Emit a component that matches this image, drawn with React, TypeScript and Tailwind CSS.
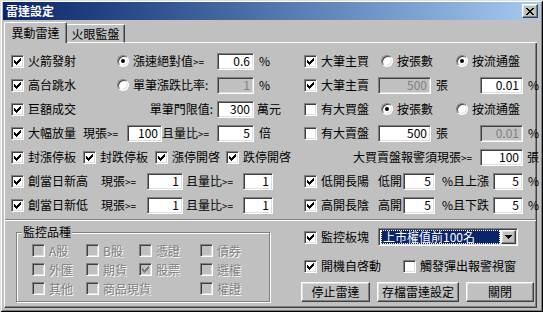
import React from "react";

const sunken =
  "border border-t-[#808080] border-l-[#808080] border-b-white border-r-white shadow-[inset_1px_1px_0_#404040,inset_-1px_-1px_0_#dfdfdf]";
const raised =
  "border border-t-white border-l-white border-b-[#404040] border-r-[#404040] shadow-[inset_-1px_-1px_0_#808080,inset_1px_1px_0_#dfdfdf]";

function CheckMark({ color }: { color: string }) {
  return (
    <svg width="7" height="7" viewBox="0 0 7 7" shapeRendering="crispEdges" fill={color}>
      <rect x="0" y="2" width="1" height="3" />
      <rect x="1" y="3" width="1" height="3" />
      <rect x="2" y="4" width="1" height="3" />
      <rect x="3" y="3" width="1" height="3" />
      <rect x="4" y="2" width="1" height="3" />
      <rect x="5" y="1" width="1" height="3" />
      <rect x="6" y="0" width="1" height="3" />
    </svg>
  );
}

function Chk({ checked = false, disabled = false }: { checked?: boolean; disabled?: boolean }) {
  return (
    <span
      className={`w-[13px] h-[13px] shrink-0 flex items-center justify-center ${sunken} ${
        disabled ? "bg-[#c0c0c0]" : "bg-white"
      }`}
    >
      {checked && <CheckMark color={disabled ? "#808080" : "#000"} />}
    </span>
  );
}

function Radio({ checked = false }: { checked?: boolean }) {
  return (
    <span className="w-[12px] h-[12px] shrink-0 rounded-full bg-white border border-t-[#808080] border-l-[#808080] border-b-white border-r-white shadow-[inset_1px_1px_0_#404040,inset_-1px_-1px_0_#dfdfdf] flex items-center justify-center">
      {checked && <span className="w-[4px] h-[4px] rounded-full bg-black" />}
    </span>
  );
}

function Edit({ w, value, disabled = false }: { w: string; value: string; disabled?: boolean }) {
  return (
    <span
      className={`${w} h-[17px] shrink-0 flex items-center justify-end pr-[3px] leading-[14px] ${sunken} ${
        disabled ? "bg-[#c0c0c0] text-[#808080]" : "bg-white text-black"
      }`}
    >
      {value}
    </span>
  );
}

function GE() {
  return <span className="text-[10px]">&gt;=</span>;
}

function CL({
  w,
  label,
  checked = false,
  disabled = false,
}: {
  w: string;
  label: React.ReactNode;
  checked?: boolean;
  disabled?: boolean;
}) {
  return (
    <span className={`${w} shrink-0 flex items-center`}>
      <Chk checked={checked} disabled={disabled} />
      <span
        className={`ml-[4px] whitespace-nowrap ${
          disabled ? "text-[#808080] [text-shadow:1px_1px_0_#ffffff]" : ""
        }`}
      >
        {label}
      </span>
    </span>
  );
}

function RL({ w, label, checked = false }: { w: string; label: React.ReactNode; checked?: boolean }) {
  return (
    <span className={`${w} shrink-0 flex items-center`}>
      <Radio checked={checked} />
      <span className="ml-[4px] whitespace-nowrap">{label}</span>
    </span>
  );
}

function Btn({ w, children }: { w: string; children: React.ReactNode }) {
  return (
    <span className={`${w} h-[20px] shrink-0 flex items-center justify-center bg-[#c0c0c0] ${raised}`}>
      {children}
    </span>
  );
}

export default function App() {
  return (
    <div className="w-[543px] h-[312px] bg-[#c0c0c0] shadow-[inset_1px_1px_0_#dfdfdf,inset_-1px_-1px_0_#000000,inset_2px_2px_0_#ffffff,inset_-2px_-2px_0_#808080] pt-[2px] px-[3px] text-[12px] leading-[14px] text-black font-['Noto_Sans_CJK_TC','Noto_Sans',sans-serif] overflow-hidden">
      {/* Title bar */}
      <div className="h-[18px] flex items-center bg-linear-to-r from-[#0a246a] to-[#a6caf0] pl-[3px] pr-[2px]">
        <span className="text-white font-bold text-[12px]">雷達設定</span>
        <span className={`ml-auto w-[16px] h-[14px] flex items-center justify-center bg-[#c0c0c0] ${raised}`}>
          <svg width="8" height="7" viewBox="0 0 8 7" shapeRendering="crispEdges" fill="#000">
            <rect x="0" y="0" width="2" height="1" />
            <rect x="6" y="0" width="2" height="1" />
            <rect x="1" y="1" width="2" height="1" />
            <rect x="5" y="1" width="2" height="1" />
            <rect x="2" y="2" width="4" height="1" />
            <rect x="3" y="3" width="2" height="1" />
            <rect x="2" y="4" width="4" height="1" />
            <rect x="1" y="5" width="2" height="1" />
            <rect x="5" y="5" width="2" height="1" />
            <rect x="0" y="6" width="2" height="1" />
            <rect x="6" y="6" width="2" height="1" />
          </svg>
        </span>
      </div>

      <div className="mt-[2px] ml-[1px] mr-[3px]">
        {/* Tabs */}
        <div className="flex items-end h-[21px]">
          <div className="w-[63px] h-[21px] shrink-0 bg-[#c0c0c0] border-l border-t border-r border-l-white border-t-white border-r-[#404040] shadow-[inset_-1px_0_0_#808080] rounded-t-[2px] flex items-center justify-center pb-[1px]">
            異動雷達
          </div>
          <div className="w-[58px] h-[19px] shrink-0 border-t border-r border-b border-t-white border-r-[#404040] border-b-white shadow-[inset_-1px_0_0_#808080] rounded-tr-[2px] flex items-center justify-center">
            火眼監盤
          </div>
          <div className="flex-1 h-[1px] bg-white" />
        </div>

        {/* Panel */}
        <div className="h-[265px] border-l border-r border-b border-l-white border-r-[#404040] border-b-[#404040] shadow-[inset_-1px_-1px_0_#808080]">
          <div className="pl-[6px] pt-[6px]">
            {/* Row 1 */}
            <div className="flex items-center h-[24px]">
              <div className="w-[293px] shrink-0 flex items-center">
                <CL w="w-[106px]" label="火箭發射" checked />
                <RL w="w-[100px]" label={<>漲速絕對值<GE /></>} checked />
                <Edit w="w-[37px]" value="0.6" />
                <span className="ml-[5px]">%</span>
              </div>
              <CL w="w-[77px]" label="大筆主買" checked />
              <RL w="w-[75px]" label="按張數" />
              <RL w="w-[75px]" label="按流通盤" checked />
            </div>
            {/* Row 2 */}
            <div className="flex items-center h-[24px]">
              <div className="w-[293px] shrink-0 flex items-center">
                <CL w="w-[106px]" label="高台跳水" checked />
                <RL w="w-[100px]" label="單筆漲跌比率:" />
                <Edit w="w-[37px]" value="1" disabled />
                <span className="ml-[5px]">%</span>
              </div>
              <CL w="w-[74px]" label="大筆主賣" checked />
              <Edit w="w-[53px]" value="500" disabled />
              <span className="w-[49px] shrink-0 pl-[5px]">張</span>
              <Edit w="w-[43px]" value="0.01" />
              <span className="ml-[5px]">%</span>
            </div>
            {/* Row 3 */}
            <div className="flex items-center h-[24px]">
              <div className="w-[293px] shrink-0 flex items-center">
                <CL w="w-[106px]" label="巨額成交" checked />
                <span className="w-[100px] shrink-0 text-right pr-[4px] whitespace-nowrap">單筆門限值:</span>
                <Edit w="w-[37px]" value="300" />
                <span className="ml-[3px]">萬元</span>
              </div>
              <CL w="w-[77px]" label="有大買盤" />
              <RL w="w-[75px]" label="按張數" checked />
              <RL w="w-[75px]" label="按流通盤" />
            </div>
            {/* Row 4 */}
            <div className="flex items-center h-[24px]">
              <div className="w-[293px] shrink-0 flex items-center">
                <CL w="w-[72px]" label="大幅放量" checked />
                <span className="w-[44px] shrink-0 whitespace-nowrap">現張<GE /></span>
                <Edit w="w-[35px]" value="100" />
                <span className="w-[55px] shrink-0 whitespace-nowrap">且量比<GE /></span>
                <Edit w="w-[37px]" value="5" />
                <span className="ml-[5px]">倍</span>
              </div>
              <CL w="w-[74px]" label="有大賣盤" />
              <Edit w="w-[53px]" value="500" />
              <span className="w-[49px] shrink-0 pl-[5px]">張</span>
              <Edit w="w-[43px]" value="0.01" disabled />
              <span className="ml-[5px]">%</span>
            </div>
            {/* Row 5 */}
            <div className="flex items-center h-[24px]">
              <div className="w-[293px] shrink-0 flex items-center">
                <CL w="w-[72px]" label="封漲停板" checked />
                <CL w="w-[72px]" label="封跌停板" checked />
                <CL w="w-[71px]" label="漲停開啓" checked />
                <CL w="w-[70px]" label="跌停開啓" checked />
              </div>
              <span className="w-[176px] shrink-0 text-right pr-[8px] whitespace-nowrap">
                大買賣盤報警須現張<GE />
              </span>
              <Edit w="w-[43px]" value="100" />
              <span className="ml-[4px]">張</span>
            </div>
            {/* Row 6 */}
            <div className="flex items-center h-[24px]">
              <div className="w-[293px] shrink-0 flex items-center">
                <CL w="w-[90px]" label="創當日新高" checked />
                <span className="w-[46px] shrink-0 whitespace-nowrap">現張<GE /></span>
                <Edit w="w-[36px]" value="1" />
                <span className="w-[60px] shrink-0 pl-[3px] whitespace-nowrap">且量比<GE /></span>
                <Edit w="w-[30px]" value="1" />
              </div>
              <CL w="w-[71px]" label="低開長陽" checked />
              <span className="w-[28px] shrink-0 pl-[3px] whitespace-nowrap">低開</span>
              <Edit w="w-[32px]" value="5" />
              <span className="w-[58px] shrink-0 pl-[7px] whitespace-nowrap">%且上漲</span>
              <Edit w="w-[30px]" value="5" />
              <span className="ml-[5px]">%</span>
            </div>
            {/* Row 7 */}
            <div className="flex items-center h-[24px]">
              <div className="w-[293px] shrink-0 flex items-center">
                <CL w="w-[90px]" label="創當日新低" checked />
                <span className="w-[46px] shrink-0 whitespace-nowrap">現張<GE /></span>
                <Edit w="w-[36px]" value="1" />
                <span className="w-[60px] shrink-0 pl-[3px] whitespace-nowrap">且量比<GE /></span>
                <Edit w="w-[30px]" value="1" />
              </div>
              <CL w="w-[71px]" label="高開長陰" checked />
              <span className="w-[28px] shrink-0 pl-[3px] whitespace-nowrap">高開</span>
              <Edit w="w-[32px]" value="5" />
              <span className="w-[58px] shrink-0 pl-[7px] whitespace-nowrap">%且下跌</span>
              <Edit w="w-[30px]" value="5" />
              <span className="ml-[5px]">%</span>
            </div>
          </div>

          {/* Separator */}
          <div className="mt-[2px] h-[2px] border-t border-t-[#808080] border-b border-b-white" />

          {/* Bottom area */}
          <div className="flex pl-[6px]">
            <div className="ml-[5px] mt-[11px] relative w-[254px] h-[70px] shrink-0 border border-[#808080] shadow-[inset_1px_1px_0_#ffffff,1px_1px_0_#ffffff]">
              <span className="absolute left-[5px] -top-[8px] px-[1px] bg-[#c0c0c0] leading-[14px]">監控品種</span>
              <div className="pt-[8px] pl-[15px]">
                <div className="flex items-center h-[19px]">
                  <CL w="w-[54px]" label="A股" disabled />
                  <CL w="w-[53px]" label="B股" disabled />
                  <CL w="w-[61px]" label="憑證" disabled />
                  <CL w="w-[50px]" label="債券" disabled />
                </div>
                <div className="flex items-center h-[19px]">
                  <CL w="w-[54px]" label="外匯" disabled />
                  <CL w="w-[53px]" label="期貨" disabled />
                  <CL w="w-[61px]" label="股票" checked disabled />
                  <CL w="w-[50px]" label="選權" disabled />
                </div>
                <div className="flex items-center h-[19px]">
                  <CL w="w-[54px]" label="其他" disabled />
                  <CL w="w-[114px]" label="商品現貨" disabled />
                  <CL w="w-[50px]" label="權證" disabled />
                </div>
              </div>
            </div>

            <div className="ml-[31px] flex flex-col">
              <div className="mt-[7px] h-[18px] flex items-center pl-[3px]">
                <CL w="w-[74px]" label="監控板塊" checked />
                <div className={`w-[140px] h-[18px] shrink-0 flex items-stretch bg-white pl-[2px] pr-[1px] py-[1px] ${sunken}`}>
                  <div className="flex-1 mr-[1px] bg-[#0a246a] text-white border border-dotted border-[#ffffff] flex items-center pl-[1px] whitespace-nowrap leading-[12px]">
                    上市權值前100名
                  </div>
                  <div className={`w-[15px] shrink-0 flex items-center justify-center bg-[#c0c0c0] ${raised}`}>
                    <svg width="7" height="4" viewBox="0 0 7 4" shapeRendering="crispEdges" fill="#000">
                      <rect x="0" y="0" width="7" height="1" />
                      <rect x="1" y="1" width="5" height="1" />
                      <rect x="2" y="2" width="3" height="1" />
                      <rect x="3" y="3" width="1" height="1" />
                    </svg>
                  </div>
                </div>
              </div>
              <div className="mt-[10px] h-[20px] flex items-center pl-[3px]">
                <CL w="w-[99px]" label="開機自啓動" checked />
                <CL w="w-[120px]" label="觸發彈出報警視窗" />
              </div>
              <div className="mt-[6px] flex items-center">
                <Btn w="w-[69px]">停止雷達</Btn>
                <span className="w-[7px] shrink-0" />
                <Btn w="w-[82px]">存檔雷達設定</Btn>
                <span className="w-[7px] shrink-0" />
                <Btn w="w-[68px]">關閉</Btn>
              </div>
            </div>
          </div>
        </div>
      </div>
    </div>
  );
}
